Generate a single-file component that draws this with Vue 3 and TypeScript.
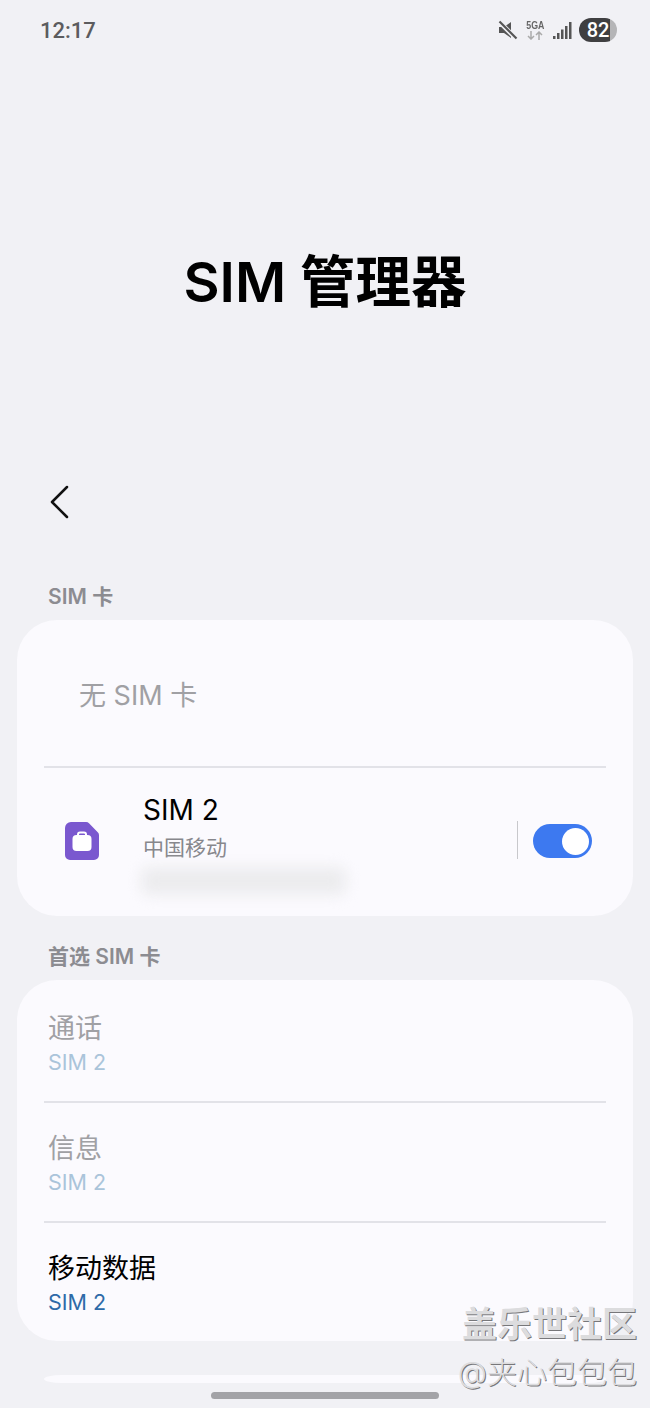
<script setup lang="ts">
const prefs = [
  { name: "通话", sim: "SIM 2", off: true },
  { name: "信息", sim: "SIM 2", off: true },
  { name: "移动数据", sim: "SIM 2", off: false },
];
</script>

<template>
  <div class="page">
    <div class="status">
      <span class="time">12:17</span>
      <div class="status-icons">
        <svg class="mute" width="20" height="20" viewBox="0 0 20 20">
          <path d="M1 7h5l7-5v16l-7-5H1z" fill="#555" />
          <path d="M1 1.500 18 18.500" stroke="#f1f1f5" stroke-width="4.500" />
          <path d="M1.500 1.500 18.500 18.500" stroke="#555" stroke-width="2.200" />
        </svg>
        <div class="net">
          <span class="net-label">5GA</span>
          <svg width="18" height="9" viewBox="0 0 18 9">
            <path d="M5 0v8M2 5l3 3 3-3" fill="none" stroke="#aaa" stroke-width="1.500" />
            <path d="M13 9V1M10 4l3-3 3 3" fill="none" stroke="#aaa" stroke-width="1.500" />
          </svg>
        </div>
        <svg class="signal" width="19" height="19" viewBox="0 0 19 19">
          <rect x="0" y="15" width="2.500" height="3" fill="#555" />
          <rect x="4" y="12" width="2.500" height="6" fill="#555" />
          <rect x="8" y="8.500" width="2.500" height="9.500" fill="#555" />
          <rect x="12" y="5" width="2.500" height="13" fill="#555" />
          <rect x="16" y="1" width="2.500" height="17" fill="#555" />
        </svg>
        <div class="battery"><span class="battery-num">82</span></div>
      </div>
    </div>

    <h1 class="title">SIM 管理器</h1>

    <div class="back">
      <svg width="20" height="34" viewBox="0 0 20 34">
        <path d="M18 2 3 17l15 15" fill="none" stroke="#111" stroke-width="2.500" stroke-linecap="round" stroke-linejoin="round" />
      </svg>
    </div>

    <div class="section-label first">SIM 卡</div>
    <section class="card">
      <div class="no-sim">无 SIM 卡</div>
      <div class="divider"></div>
      <div class="sim-row">
        <svg class="sim-icon" width="34" height="38" viewBox="0 0 34 38">
          <path d="M6 0h15a4 4 0 0 1 3 1.300l8.500 8.700a4 4 0 0 1 1.500 3V33a5 5 0 0 1-5 5H5a5 5 0 0 1-5-5V6a6 6 0 0 1 6-6z" fill="#7a58cf" />
          <rect x="7.500" y="13" width="19" height="16" rx="4" fill="#fff" />
          <path d="M13 14v-1.500a2 2 0 0 1 2-2h4a2 2 0 0 1 2 2V14" fill="none" stroke="#fff" stroke-width="2" />
        </svg>
        <div class="sim-text">
          <div class="sim-name">SIM 2</div>
          <div class="sim-carrier">中国移动</div>
          <div class="sim-blur"></div>
        </div>
        <div class="sim-sep"></div>
        <div class="toggle"><div class="knob"></div></div>
      </div>
    </section>

    <div class="section-label second">首选 SIM 卡</div>
    <section class="card prefs">
      <template v-for="(p, i) in prefs" :key="p.name">
        <div v-if="i > 0" class="divider"></div>
        <div class="pref" :class="{ off: p.off }">
          <div class="pref-name">{{ p.name }}</div>
          <div class="pref-sim">{{ p.sim }}</div>
        </div>
      </template>
    </section>

    <section class="card stub"></section>

    <div class="watermark">
      <div class="wm-big">盖乐世社区</div>
      <div class="wm-small">@夹心包包包</div>
    </div>
    <div class="home-bar"></div>
  </div>
</template>

<style>
html,
body {
  margin: 0;
  background: #f1f1f5;
}
</style>

<style scoped>
.page {
  position: relative;
  width: 650px;
  height: 1408px;
  overflow: hidden;
  background: #f1f1f5;
  font-family: Inter, "Noto Sans CJK SC", sans-serif;
  color: #000;
}
.status {
  height: 60px;
  padding: 0 33px 0 40px;
  display: flex;
  justify-content: space-between;
  align-items: center;
  box-sizing: border-box;
}
.time {
  font-size: 22px;
  font-weight: 500;
  color: #5c5c5e;
  font-family: Roboto, sans-serif;
}
.status-icons {
  display: flex;
  align-items: center;
}
.mute {
  margin-right: 8px;
}
.net {
  width: 18px;
  display: flex;
  flex-direction: column;
  align-items: center;
  margin-right: 9px;
}
.net-label {
  font-size: 11px;
  line-height: 11px;
  font-weight: 700;
  color: #666;
  font-family: "Liberation Sans", sans-serif;
  transform: scaleX(0.8);
}
.signal {
  margin-right: 7px;
}
.battery {
  width: 38px;
  height: 24px;
  border-radius: 12px;
  background: linear-gradient(90deg, #3f3f41 82%, #b5b5b7 82%);
  display: flex;
  align-items: center;
  justify-content: center;
}
.battery-num {
  font-size: 20px;
  font-weight: 500;
  color: #fff;
  font-family: Roboto, sans-serif;
}
.title {
  margin: 0;
  padding-top: 181px;
  height: 82px;
  font-size: 55.500px;
  line-height: 82px;
  font-weight: 600;
  text-align: center;
  box-sizing: content-box;
}
.back {
  margin-top: 162px;
  padding-left: 49px;
  height: 34px;
}
.back svg {
  display: block;
}
.section-label {
  padding-left: 48px;
  font-size: 21px;
  line-height: 26px;
  font-weight: 600;
  color: #8c8c91;
}
.section-label.first {
  margin-top: 65px;
}
.section-label.second {
  margin-top: 28px;
}
.card {
  margin: 10px 17px 0;
  background: #fbfafe;
  border-radius: 40px;
}
.no-sim {
  height: 146px;
  padding-left: 62px;
  display: flex;
  align-items: center;
  font-size: 27px;
  color: #a0a0a4;
}
.divider {
  height: 2px;
  margin: 0 27px;
  background: #e2e2e8;
}
.sim-row {
  height: 148px;
  display: flex;
  align-items: flex-start;
  padding: 0 41px 0 48px;
}
.sim-icon {
  margin-top: 54px;
  flex: none;
}
.sim-text {
  margin-left: 44px;
  margin-top: 25px;
  flex: 1;
}
.sim-name {
  font-size: 28px;
  line-height: 34px;
}
.sim-carrier {
  margin-top: 7px;
  font-size: 21px;
  line-height: 28px;
  color: #87878c;
}
.sim-blur {
  margin-top: 5px;
  margin-left: -2px;
  width: 205px;
  height: 28px;
  border-radius: 8px;
  background: #ececee;
  filter: blur(7px);
}
.sim-sep {
  width: 1px;
  height: 38px;
  margin-top: 53px;
  background: #c8c8cc;
}
.toggle {
  margin-left: 15px;
  margin-top: 56px;
  width: 59px;
  height: 34px;
  border-radius: 17px;
  background: #3d79f0;
  display: flex;
  justify-content: flex-end;
  align-items: center;
  padding-right: 3px;
  box-sizing: border-box;
}
.knob {
  width: 27px;
  height: 27px;
  border-radius: 50%;
  background: #fff;
}
.prefs {
  padding-top: 3px;
}
.pref {
  height: 118px;
  box-sizing: border-box;
  padding: 29px 31px 0;
}
.pref-name {
  font-size: 27px;
  line-height: 34px;
}
.pref-sim {
  margin-top: 2px;
  font-size: 21.500px;
  line-height: 28px;
  color: #2e6aa8;
}
.pref.off .pref-name {
  color: #a0a0a4;
}
.pref.off .pref-sim {
  color: #aac4da;
}
.stub {
  margin: 34px 44px 0;
  height: 8px;
  border-radius: 18px / 4px;
}
.watermark {
  position: absolute;
  right: 13px;
  top: 1302px;
  text-align: right;
  color: #dcdcde;
  text-shadow: 1px 1px 0 #77777a;
}
.wm-big {
  font-size: 35px;
  line-height: 44px;
  font-weight: 600;
}
.wm-small {
  font-size: 30px;
  line-height: 40px;
  margin-top: 6px;
  font-weight: 300;
}
.home-bar {
  position: absolute;
  left: 211px;
  top: 1392px;
  width: 228px;
  height: 7px;
  border-radius: 4px;
  background: #a3a3a7;
}
</style>
